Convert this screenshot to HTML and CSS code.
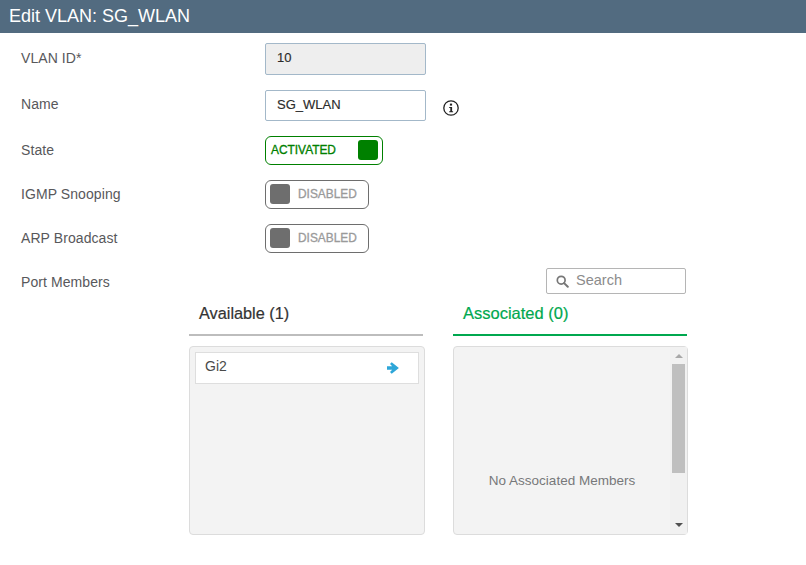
FILE: index.html
```html
<!DOCTYPE html>
<html lang="en">
<head>
<meta charset="utf-8">
<title>Edit VLAN: SG_WLAN</title>
<link rel="stylesheet" href="styles.css">
</head>
<body>
<header class="title-bar">Edit VLAN: SG_WLAN</header>
<main class="form">
  <div class="row row-id">
    <label class="label">VLAN ID*</label>
    <div class="field field-readonly">10</div>
  </div>
  <div class="row row-name">
    <label class="label">Name</label>
    <div class="field">SG_WLAN</div>
    <svg class="info" width="16" height="16" viewBox="0 0 16 16" aria-hidden="true">
      <circle cx="8" cy="8" r="7.2" fill="none" stroke="#222" stroke-width="1.3"/>
      <rect x="6.9" y="3.6" width="2.2" height="2" fill="#222"/>
      <path d="M6.2 7h2.9v4.2h1v1.1H6.2v-1.1h1.1V8.1H6.2z" fill="#222"/>
    </svg>
  </div>
  <div class="row row-toggle">
    <label class="label">State</label>
    <div class="toggle toggle-on"><span class="toggle-text">ACTIVATED</span><span class="knob"></span></div>
  </div>
  <div class="row row-toggle">
    <label class="label">IGMP Snooping</label>
    <div class="toggle toggle-off"><span class="knob"></span><span class="toggle-text">DISABLED</span></div>
  </div>
  <div class="row row-toggle">
    <label class="label">ARP Broadcast</label>
    <div class="toggle toggle-off"><span class="knob"></span><span class="toggle-text">DISABLED</span></div>
  </div>
  <div class="port-head">
    <span class="label">Port Members</span>
    <div class="search">
      <svg width="13" height="13" viewBox="0 0 13 13" aria-hidden="true">
        <circle cx="5.2" cy="5.2" r="3.9" fill="none" stroke="#777" stroke-width="1.7"/>
        <path d="M8.1 8.1l3.7 3.7" stroke="#777" stroke-width="2" stroke-linecap="round"/>
      </svg>
      <span class="search-text">Search</span>
    </div>
  </div>
  <div class="dual">
    <section class="col col-available">
      <h2 class="col-title">Available (1)</h2>
      <div class="list">
        <div class="item">
          <span>Gi2</span>
          <svg width="14" height="14" viewBox="0 0 14 14" aria-hidden="true">
            <path d="M1 5.2h5.2L4 2.9 5.7 1.2 12.9 7l-7.2 5.8L4 11.1l2.2-2.3H1z" fill="#2ea6d8"/>
          </svg>
        </div>
      </div>
    </section>
    <section class="col col-associated">
      <h2 class="col-title">Associated (0)</h2>
      <div class="list list-empty">
        <div class="empty">No Associated Members</div>
        <div class="scrollbar">
          <span class="arrow arrow-up"></span>
          <span class="thumb"></span>
          <span class="arrow arrow-down"></span>
        </div>
      </div>
    </section>
  </div>
</main>
</body>
</html>
```

FILE: styles.css
```css
* { box-sizing: border-box; }
html, body { margin: 0; padding: 0; }
body {
  width: 806px;
  height: 565px;
  overflow: hidden;
  background: #fff;
  font-family: "Liberation Sans", Arial, sans-serif;
  font-size: 14px;
  color: #58585b;
}
.title-bar {
  height: 33px;
  padding-left: 9px;
  background: #526b80;
  color: #fff;
  font-size: 18px;
  line-height: 32px;
}
.form { padding: 10px 0 0 21px; }
.row { display: flex; align-items: flex-start; }
.label {
  display: block;
  width: 244px;
  font-size: 14px;
  line-height: 16px;
  letter-spacing: 0.08px;
  color: #58585b;
}
.row-id { height: 47px; }
.row-id .label { padding-top: 7px; }
.row-name { height: 46px; }
.row-name .label { padding-top: 6px; }
.row-toggle { height: 44px; }
.row-toggle .label { padding-top: 6px; }
.field {
  width: 161px;
  height: 32px;
  padding-left: 11px;
  border: 1px solid #a3b8c9;
  border-radius: 2px;
  color: #2b2b2b;
  font-size: 13px;
  line-height: 28px;
  -webkit-text-stroke: 0.15px #2b2b2b;
}
.row-name .field { height: 31px; }
.field-readonly { background: #eee; }
.info { margin: 10px 0 0 17px; }
.toggle {
  display: flex;
  align-items: center;
  height: 29px;
  border-radius: 6px;
  font-size: 11.9px;
  -webkit-text-stroke: 0.3px currentColor;
}
.toggle-text { position: relative; top: -1px; }
.knob { width: 20px; height: 20px; margin-bottom: 1px; border-radius: 3px; }
.toggle-on {
  width: 118px;
  padding: 0 4px 0 5px;
  justify-content: space-between;
  border: 1px solid #008000;
  color: #008000;
}
.toggle-on .knob { background: #008000; }
.toggle-off {
  width: 104px;
  gap: 8px;
  padding-left: 4px;
  border: 1px solid #6e6e6e;
  color: #9a9a9a;
}
.toggle-off .knob { background: #6e6e6e; }
.port-head { display: flex; align-items: flex-start; height: 35px; padding-top: 1px; margin-top: -1px; }
.port-head .label { padding-top: 6px; width: 525px; }
.search {
  display: flex;
  align-items: center;
  gap: 7px;
  width: 140px;
  height: 26px;
  padding-left: 9px;
  border: 1px solid #b5b5b5;
  border-radius: 2px;
  color: #8c8c8c;
  font-size: 14.5px;
}
.search-text { position: relative; top: -1px; }
.dual { display: flex; gap: 28px; margin-left: 168px; }
.col { width: 236px; }
.col-associated { width: 235px; }
.col-title {
  margin: 0;
  height: 34px;
  width: 234px;
  padding-left: 10px;
  border-bottom: 2px solid #bdbdbd;
  font-size: 16.3px;
  font-weight: normal;
  line-height: 22px;
  color: #333;
  -webkit-text-stroke: 0.2px currentColor;
}
.col-associated .col-title { border-bottom-color: #00a84f; color: #00a84f; font-size: 16.5px; }
.list {
  display: flow-root;
  position: relative;
  height: 189px;
  margin-top: 10px;
  background: #f3f3f3;
  border: 1px solid #dcdcdc;
  border-radius: 4px;
  padding: 5px;
}
.item {
  display: flex;
  align-items: center;
  justify-content: space-between;
  height: 32px;
  padding: 0 18px 0 9px;
  background: #fff;
  border: 1px solid #dedede;
  color: #4a4a4a;
  font-size: 14px;
}
.item span { position: relative; top: -2px; }
.list-empty { padding: 0; display: flex; }
.empty {
  flex: 1;
  padding: 126px 0 0;
  text-align: center;
  color: #77787a;
  font-size: 13.5px;
  line-height: 16px;
}
.scrollbar {
  display: flex;
  flex-direction: column;
  align-items: center;
  width: 17px;
  background: #f1f1f1;
}
.thumb { width: 13px; height: 109px; margin-top: 6px; background: #bfbfbf; }
.arrow { width: 0; height: 0; border-left: 4px solid transparent; border-right: 4px solid transparent; }
.arrow-up { margin-top: 7px; border-bottom: 4px solid #a8a8a8; }
.arrow-down { margin-top: auto; margin-bottom: 7px; border-top: 4px solid #505050; }
```
